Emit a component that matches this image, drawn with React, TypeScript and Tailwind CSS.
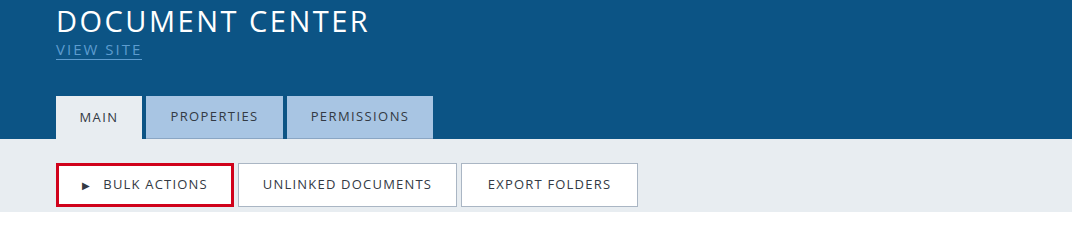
import React from 'react';

const tabs = [
  { label: 'MAIN', active: true, w: 'w-[86px]' },
  { label: 'PROPERTIES', active: false, w: 'w-[137px]' },
  { label: 'PERMISSIONS', active: false, w: 'w-[146px]' },
];

export default function App() {
  return (
    <div className="w-[1072px] h-[212px] overflow-hidden bg-[#e8edf1]" style={{ fontFamily: "'Open Sans', 'Liberation Sans', sans-serif" }}>
      {/* Header */}
      <div className="bg-[#0c5485] h-[139px] pl-[56px] flex flex-col">
        <h1 className="text-white text-[29px] leading-[32px] tracking-[2.5px] pt-[5px] font-normal">DOCUMENT CENTER</h1>
        <div>
          <a className="inline-block text-[#5d9ccf] text-[15px] leading-[18px] tracking-[2px] border-b border-[#5d9ccf] pb-[1px]">VIEW SITE</a>
        </div>
        <div className="mt-auto flex gap-[4px]">
          {tabs.map((t) => (
            <div
              key={t.label}
              className={
                t.active
                  ? `${t.w} h-[43px] bg-[#e8edf1] flex items-center justify-center text-[13px] tracking-[1.4px] text-[#333a44]`
                  : `${t.w} h-[43px] bg-[#a8c5e3] border-b border-[#8aa6c4] flex items-center justify-center text-[13px] tracking-[1.4px] text-[#333a44]`
              }
            >
              {t.label}
            </div>
          ))}
        </div>
      </div>
      {/* Actions */}
      <div className="pl-[56px] pt-[24px] flex gap-[4px]">
        <button className="w-[178px] h-[44px] bg-white border-[3px] border-[#d0021b] flex items-center justify-center gap-[12px] text-[13px] tracking-[1.2px] text-[#333a44]">
          <span className="text-[10px]">▶</span>
          <span>BULK ACTIONS</span>
        </button>
        <button className="w-[219px] h-[44px] bg-white border border-[#aab6c4] flex items-center justify-center text-[13px] tracking-[1.2px] text-[#333a44]">
          UNLINKED DOCUMENTS
        </button>
        <button className="w-[177px] h-[44px] bg-white border border-[#aab6c4] flex items-center justify-center text-[13px] tracking-[1.2px] text-[#333a44]">
          EXPORT FOLDERS
        </button>
      </div>
    </div>
  );
}
